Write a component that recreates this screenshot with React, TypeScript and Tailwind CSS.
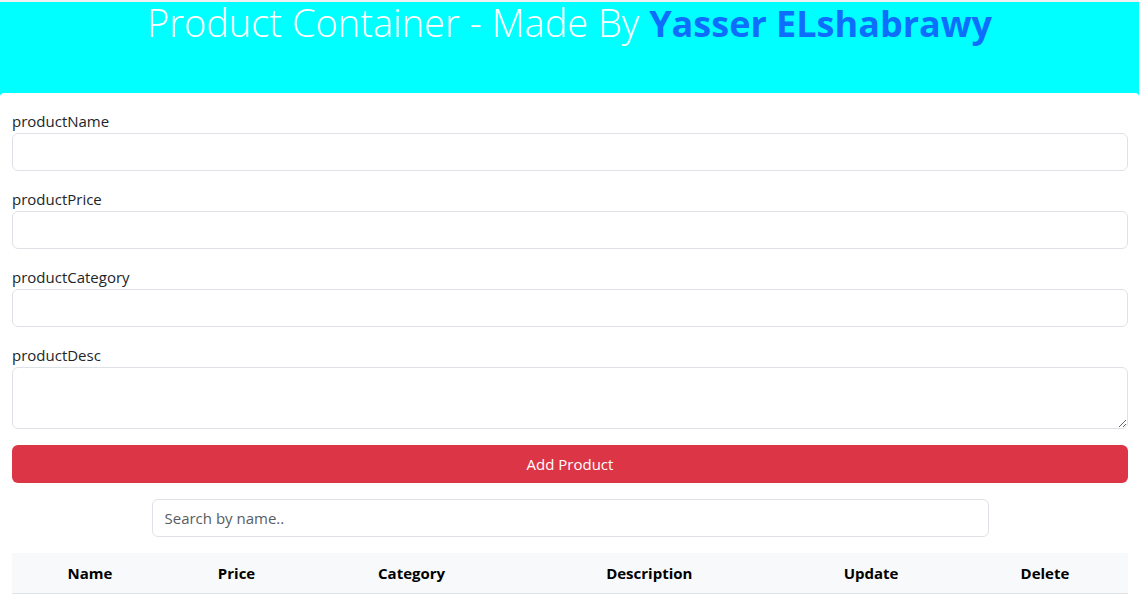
import { useState } from "react";

const fields = ["productName", "productPrice", "productCategory"];

const columns = ["Name", "Price", "Category", "Description", "Update", "Delete"];

const inputClass =
  "block h-[38px] w-full rounded-md border border-[#dee2e6] bg-white px-3 text-[#212529] outline-none focus:border-[#86b7fe]";

export default function App() {
  const [query, setQuery] = useState("");

  return (
    <div className="bg-[#00ffff] font-['Open_Sans',sans-serif] text-[15px] text-[#212529]">
      <header className="border-t-2 border-[#f1f1f1] pb-[49px] text-center">
        <h1 className="text-[38px] leading-[41px] font-light text-white">
          Product Container - Made By{" "}
          <span className="text-[36px] font-bold text-[#0d6efd]">Yasser ELshabrawy</span>
        </h1>
      </header>
      <main className="rounded-t-sm bg-white pt-4 pr-[11px] pl-3">
        <form onSubmit={(event) => event.preventDefault()}>
          {fields.map((field) => (
            <div key={field} className="mb-4">
              <label htmlFor={field} className="block leading-6">
                {field}
              </label>
              <input id={field} type="text" className={inputClass} />
            </div>
          ))}
          <div className="mb-4">
            <label htmlFor="productDesc" className="block leading-6">
              productDesc
            </label>
            <textarea
              id="productDesc"
              className="block h-[62px] w-full resize-y rounded-md border border-[#dee2e6] bg-white px-3 py-1.5 outline-none focus:border-[#86b7fe]"
            />
          </div>
          <button type="submit" className="block h-[38px] w-full rounded-md bg-[#dc3545] text-white">
            Add Product
          </button>
        </form>
        <div className="mx-auto my-4 w-3/4">
          <input
            type="text"
            aria-label="Search by name"
            placeholder="Search by name.."
            value={query}
            onChange={(event) => setQuery(event.target.value)}
            className={inputClass + " placeholder:text-[#595c5f]"}
          />
        </div>
        <table className="w-full border-collapse text-center">
          <thead className="bg-[#f8f9fa] text-black">
            <tr className="border-b border-[#dee2e6]">
              {columns.map((column) => (
                <th key={column} scope="col" className="p-2 leading-6 font-bold">
                  {column}
                </th>
              ))}
            </tr>
          </thead>
          <tbody />
        </table>
      </main>
    </div>
  );
}
